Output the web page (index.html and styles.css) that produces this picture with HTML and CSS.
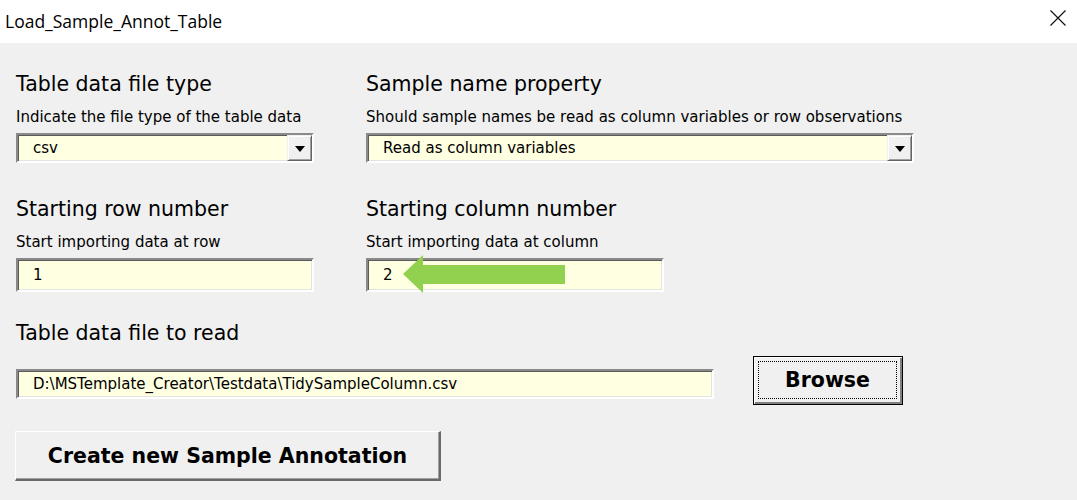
FILE: index.html
```html
<!DOCTYPE html>
<html>
<head>
<meta charset="utf-8">
<link rel="stylesheet" href="styles.css">
</head>
<body>
<div class="window">
  <div class="titlebar">
    <span class="title">Load_Sample_Annot_Table</span>
    <span class="close">
      <svg width="16" height="16" viewBox="0 0 16 16"><path d="M0.5 0.5 L15.5 15.5 M15.5 0.5 L0.5 15.5" stroke="#111" stroke-width="1.2" fill="none"/></svg>
    </span>
  </div>
  <div class="content">
    <div class="row">
      <div class="field">
        <div class="heading">Table data file type</div>
        <div class="label">Indicate the file type of the table data</div>
        <div class="combo">
          <span class="value">csv</span>
          <span class="drop"><span class="tri"></span></span>
        </div>
      </div>
      <div class="field wide">
        <div class="heading">Sample name property</div>
        <div class="label">Should sample names be read as column variables or row observations</div>
        <div class="combo">
          <span class="value">Read as column variables</span>
          <span class="drop"><span class="tri"></span></span>
        </div>
      </div>
    </div>
    <div class="row row2">
      <div class="field">
        <div class="heading">Starting row number</div>
        <div class="label">Start importing data at row</div>
        <div class="textbox tall"><span class="value">1</span></div>
      </div>
      <div class="field">
        <div class="heading">Starting column number</div>
        <div class="label">Start importing data at column</div>
        <div class="textbox tall arrowed"><span class="value">2</span>
          <svg class="arrow" width="162" height="38" viewBox="0 0 162 38"><polygon points="0,19 20,0 20,10 162,10 162,29 20,29 20,38" fill="#92d050"/></svg>
        </div>
      </div>
    </div>
    <div class="row3">
      <div class="heading">Table data file to read</div>
      <div class="fileline">
        <div class="textbox file"><span class="value">D:\MSTemplate_Creator\Testdata\TidySampleColumn.csv</span></div>
        <button class="btn browse"><span class="focus">Browse</span></button>
      </div>
    </div>
    <button class="btn create">Create new Sample Annotation</button>
  </div>
</div>
</body>
</html>
```

FILE: styles.css
```css
html, body {
  margin: 0;
  padding: 0;
  background: #f0f0f0;
}
.window {
  width: 1077px;
  height: 500px;
  overflow: hidden;
  font-family: "DejaVu Sans", sans-serif;
  color: #000;
}
.titlebar {
  height: 43px;
  background: #fff;
  display: flex;
  align-items: center;
  justify-content: space-between;
  padding: 0 11px 0 5px;
}
.title {
  font-family: "Open Sans", "Noto Sans", sans-serif;
  font-size: 17.5px;
  margin-top: -2px;
  color: #000;
}
.close {
  display: flex;
  margin-top: -7px;
}
.content {
  padding: 0 16px;
}
.row {
  display: flex;
  gap: 52px;
  margin-top: 28px;
}
.row2 {
  margin-top: 33px;
}
.field {
  width: 298px;
}
.field.wide {
  width: 548px;
}
.heading {
  font-size: 20.5px;
  line-height: 26px;
  color: #000;
}
.label {
  font-size: 15px;
  line-height: 18px;
  margin-top: 11px;
  white-space: nowrap;
}
.combo, .textbox {
  position: relative;
  height: 30px;
  margin-top: 7px;
  background: #ffffe1;
  box-sizing: border-box;
  border-top: 2px solid #8a8a8a;
  border-left: 2px solid #8a8a8a;
  border-right: 2px solid #fff;
  border-bottom: 2px solid #fff;
  box-shadow: inset 1px 1px 0 #5a5a5a, inset -1px -1px 0 #e3e3e3;
  display: flex;
  align-items: center;
  font-size: 15px;
  white-space: nowrap;
}
.textbox.tall {
  height: 34px;
}
.value {
  padding-left: 15px;
}
.drop {
  position: absolute;
  right: 0;
  top: 0;
  bottom: 0;
  width: 25px;
  background: #f0f0f0;
  border-top: 1px solid #f0f0f0;
  border-left: 1px solid #f0f0f0;
  border-right: 1px solid #646464;
  border-bottom: 1px solid #646464;
  box-shadow: inset 1px 1px 0 #fff, inset -1px -1px 0 #a0a0a0;
  box-sizing: border-box;
  display: flex;
  align-items: center;
  justify-content: center;
}
.tri {
  width: 0;
  height: 0;
  border-left: 5px solid transparent;
  border-right: 5px solid transparent;
  border-top: 6px solid #000;
  margin-top: 1px;
}
.arrow {
  position: absolute;
  left: 35px;
  top: -5px;
}
.row3 {
  margin-top: 28px;
}
.fileline {
  display: flex;
  align-items: flex-start;
  gap: 39px;
}
.textbox.file {
  width: 698px;
  margin-top: 23px;
}
.btn {
  font-family: "DejaVu Sans", sans-serif;
  font-weight: bold;
  font-size: 20.5px;
  color: #000;
  background: #f0f0f0;
  box-sizing: border-box;
  padding: 0;
  margin: 0;
}
.browse {
  width: 150px;
  height: 49px;
  margin-top: 10px;
  border: 1px solid #000;
  box-shadow: inset 1px 1px 0 #fff, inset -2px -2px 0 #808080;
  padding: 4px 5px 5px 4px;
  display: flex;
}
.focus {
  flex: 1;
  border: 1px dotted #000;
  display: flex;
  align-items: center;
  justify-content: center;
}
.create {
  display: block;
  width: 426px;
  height: 50px;
  margin-top: 26px;
  margin-left: -1px;
  border: none;
  border-top: 1px solid #fff;
  border-left: 1px solid #fff;
  border-right: 2px solid #696969;
  border-bottom: 2px solid #696969;
  box-shadow: inset -1px -1px 0 #a0a0a0;
}
```
